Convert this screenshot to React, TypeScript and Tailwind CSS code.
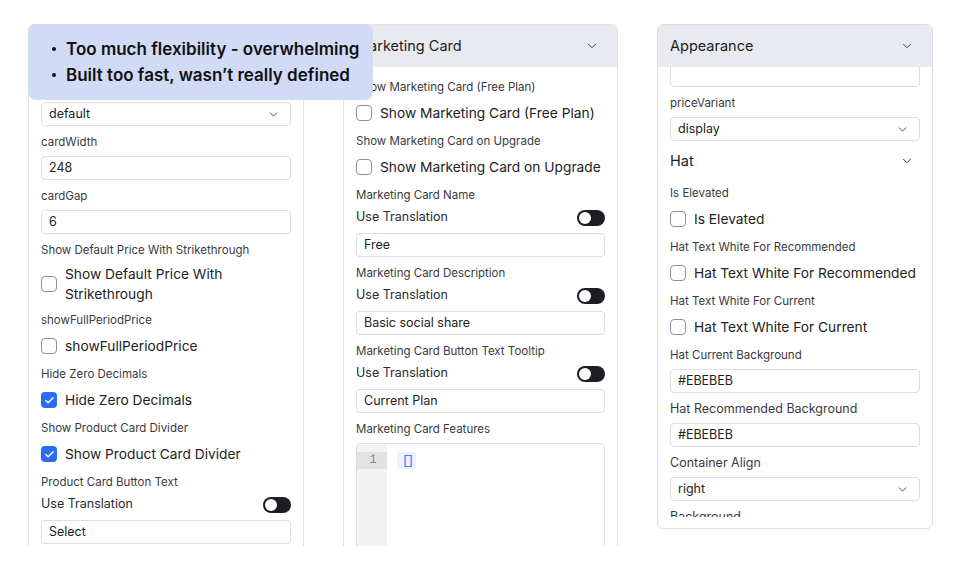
import { ChevronDown, Check } from "lucide-react";
import type { ReactNode } from "react";

const font = { fontFamily: "Inter, 'Noto Sans', sans-serif" };

function Label({ children, big }: { children: ReactNode; big?: boolean }) {
  return (
    <div className={`h-[14px] whitespace-nowrap leading-[14px] text-[#3a3a3f] ${big ? "text-[12.5px]" : "text-[11.5px]"}`}>
      {children}
    </div>
  );
}

function TextInput({ value }: { value: string }) {
  return (
    <div className="flex h-[24px] items-center rounded-[4px] border border-[#dcdde5] px-[7px] text-[12.5px] text-[#222]">
      {value}
    </div>
  );
}

function SelectBox({ value }: { value: string }) {
  return (
    <div className="flex h-[24px] items-center justify-between rounded-[4px] border border-[#dcdde5] pl-[7px] pr-[10px] text-[12.5px] text-[#222]">
      <span>{value}</span>
      <ChevronDown size={13} strokeWidth={1.6} className="text-[#333]" />
    </div>
  );
}

function CheckRow({ label, checked }: { label: ReactNode; checked?: boolean }) {
  return (
    <div className="flex min-h-[24px] items-center gap-[8px]">
      {checked ? (
        <div className="flex h-[16px] w-[16px] shrink-0 items-center justify-center rounded-[4px] bg-[#2b6cf0]">
          <Check size={11} strokeWidth={3} className="text-white" />
        </div>
      ) : (
        <div className="h-[16px] w-[16px] shrink-0 rounded-[4px] border-[1.5px] border-[#8c90a8] bg-white" />
      )}
      <span className="whitespace-nowrap text-[13.75px] leading-[20px] text-[#222]">{label}</span>
    </div>
  );
}

function TranslationRow() {
  return (
    <div className="flex h-[17px] items-center justify-between">
      <span className="text-[12.5px] text-[#2a2a2e]">Use Translation</span>
      <div className="flex h-[16px] w-[28px] items-center rounded-full bg-[#1d1e23] pl-[2px]">
        <div className="h-[12px] w-[12px] rounded-full bg-white" />
      </div>
    </div>
  );
}

function Field({ children }: { children: ReactNode }) {
  return <div className="flex flex-col gap-[7px]">{children}</div>;
}

function PanelHeader({ title }: { title: string }) {
  return (
    <div className="flex h-[42px] shrink-0 items-center justify-between rounded-t-[6px] bg-[#e9eaf0] pl-[12px] pr-[18px]">
      <span className="text-[14.5px] text-[#222]">{title}</span>
      <ChevronDown size={14} strokeWidth={1.6} className="text-[#333]" />
    </div>
  );
}

function LayoutPanel() {
  return (
    <div className="flex h-[522px] w-[276px] shrink-0 flex-col overflow-hidden rounded-t-[6px] border-x border-t border-[#e2e3ea]">
      <PanelHeader title="Layout" />
      <div className="flex flex-col gap-[9px] px-[12px] pt-[14px]">
        <Field>
          <Label>cardVariant</Label>
          <SelectBox value="default" />
        </Field>
        <Field>
          <Label>cardWidth</Label>
          <TextInput value="248" />
        </Field>
        <Field>
          <Label>cardGap</Label>
          <TextInput value="6" />
        </Field>
        <Field>
          <Label>Show Default Price With Strikethrough</Label>
          <CheckRow
            label={
              <>
                Show Default Price With
                <br />
                Strikethrough
              </>
            }
          />
        </Field>
        <Field>
          <Label>showFullPeriodPrice</Label>
          <CheckRow label="showFullPeriodPrice" />
        </Field>
        <Field>
          <Label>Hide Zero Decimals</Label>
          <CheckRow label="Hide Zero Decimals" checked />
        </Field>
        <Field>
          <Label>Show Product Card Divider</Label>
          <CheckRow label="Show Product Card Divider" checked />
        </Field>
        <Field>
          <Label>Product Card Button Text</Label>
          <TranslationRow />
          <TextInput value="Select" />
        </Field>
      </div>
    </div>
  );
}

function MarketingPanel() {
  return (
    <div className="flex h-[522px] w-[275px] shrink-0 flex-col overflow-hidden rounded-t-[6px] border-x border-t border-[#e2e3ea]">
      <PanelHeader title="Marketing Card" />
      <div className="flex flex-col gap-[9px] px-[12px] pt-[13px]">
        <Field>
          <Label>Show Marketing Card (Free Plan)</Label>
          <CheckRow label="Show Marketing Card (Free Plan)" />
        </Field>
        <Field>
          <Label>Show Marketing Card on Upgrade</Label>
          <CheckRow label="Show Marketing Card on Upgrade" />
        </Field>
        <Field>
          <Label>Marketing Card Name</Label>
          <TranslationRow />
          <TextInput value="Free" />
        </Field>
        <Field>
          <Label>Marketing Card Description</Label>
          <TranslationRow />
          <TextInput value="Basic social share" />
        </Field>
        <Field>
          <Label>Marketing Card Button Text Tooltip</Label>
          <TranslationRow />
          <TextInput value="Current Plan" />
        </Field>
        <Field>
          <Label>Marketing Card Features</Label>
          {/* json editor */}
          <div className="flex h-[140px] overflow-hidden rounded-[5px] border border-[#dcdde5]">
            <div className="w-[30px] shrink-0 bg-[#f2f2f2] pt-[8px]">
              <div className="flex h-[17px] items-center justify-center bg-[#e3e3e3] pl-[2px] font-mono text-[12.5px] text-[#8a8a8a]">
                1
              </div>
            </div>
            <div className="pl-[10px] pt-[8px]">
              <span className="flex h-[17px] w-[19px] items-center justify-center bg-[#eaf3ff] font-mono text-[13px] tracking-[-3px] text-[#3b7bf0]">
                []
              </span>
            </div>
          </div>
        </Field>
      </div>
    </div>
  );
}

function AppearancePanel() {
  return (
    <div className="flex h-[505px] w-[276px] shrink-0 flex-col rounded-[6px] border border-[#dcdde6] pb-[11px]">
      <PanelHeader title="Appearance" />
      <div className="flex min-h-0 flex-1 flex-col gap-[9px] overflow-hidden px-[12px]">
        <div className="-mt-[4px]">
          <TextInput value="" />
        </div>
        <Field>
          <Label>priceVariant</Label>
          <SelectBox value="display" />
        </Field>
        <div className="flex h-[22px] shrink-0 items-center justify-between pr-[6px]">
          <span className="text-[14.5px] text-[#222]">Hat</span>
          <ChevronDown size={14} strokeWidth={1.6} className="text-[#333]" />
        </div>
        <div className="mt-[5px]">
          <Field>
            <Label>Is Elevated</Label>
            <CheckRow label="Is Elevated" />
          </Field>
        </div>
        <Field>
          <Label>Hat Text White For Recommended</Label>
          <CheckRow label="Hat Text White For Recommended" />
        </Field>
        <Field>
          <Label>Hat Text White For Current</Label>
          <CheckRow label="Hat Text White For Current" />
        </Field>
        <Field>
          <Label>Hat Current Background</Label>
          <TextInput value="#EBEBEB" />
        </Field>
        <Field>
          <Label big>Hat Recommended Background</Label>
          <TextInput value="#EBEBEB" />
        </Field>
        <Field>
          <Label big>Container Align</Label>
          <SelectBox value="right" />
        </Field>
        <Field>
          <Label big>Background</Label>
          <TextInput value="" />
        </Field>
      </div>
    </div>
  );
}

const notes = ["Too much flexibility - overwhelming", "Built too fast, wasn’t really defined"];

export default function App() {
  return (
    <div className="relative h-[573px] w-[960px] overflow-hidden bg-white" style={font}>
      <div className="flex items-start gap-[39px] pl-[28px] pt-[24px]">
        <LayoutPanel />
        <MarketingPanel />
        <AppearancePanel />
      </div>

      {/* callout note over the first panel */}
      <ul className="absolute left-[28px] top-[24px] flex h-[76px] w-[345px] flex-col justify-center gap-[4px] rounded-[8px] bg-[#d1dbf6] pl-[24px]">
        {notes.map((n) => (
          <li key={n} className="flex items-center gap-[10px] text-[17px] font-semibold leading-[22px] text-[#111]">
            <span className="h-[4px] w-[4px] shrink-0 rounded-full bg-[#111]" />
            <span className="whitespace-nowrap">{n}</span>
          </li>
        ))}
      </ul>
    </div>
  );
}
